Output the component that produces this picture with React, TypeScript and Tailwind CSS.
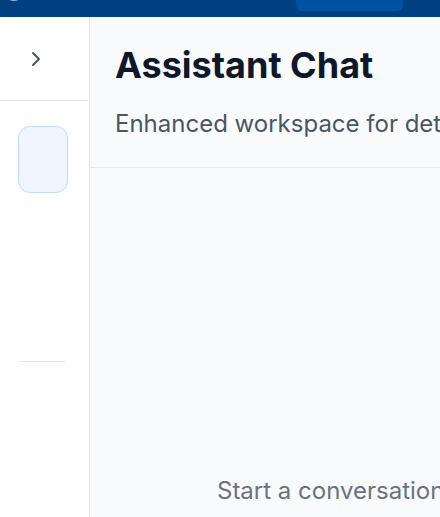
import { ChevronRight } from "lucide-react"

const App = () => {
  return (
    <div className="h-[517px] w-[440px] overflow-hidden flex flex-col font-['Inter',sans-serif]">
      {/* top bar, mostly scrolled out of view */}
      <div className="h-[17px] shrink-0 bg-[#004080] flex items-start overflow-hidden pl-1">
        <div className="-mt-[19px] w-5 h-5 rounded-full border-2 border-white/60 shrink-0" />
        <span className="-mt-[18px] ml-[14px] text-white/80 text-sm leading-5 whitespace-nowrap">Assistant Help</span>
        <div className="ml-auto mr-[37px] w-[107px] h-[40px] -mt-[29px] rounded-md bg-[#0052a3] flex items-end justify-center pb-[10px] text-white text-sm leading-5 shrink-0">
          <span className="pl-8 whitespace-nowrap">Copy reply</span>
        </div>
      </div>

      <div className="flex-1 flex min-h-0">
        <aside className="w-[90px] shrink-0 bg-white border-r border-gray-200 flex flex-col">
          <div className="h-[84px] shrink-0 flex items-center pl-6 border-b border-gray-200">
            <ChevronRight className="w-6 h-6 text-gray-600" strokeWidth={2} />
          </div>
          <div className="pt-[25px] pl-[18px]">
            <div className="w-[50px] h-[67px] rounded-xl border border-blue-200 bg-blue-50" />
          </div>
          <div className="mt-[168px] ml-[18px] w-[47px] h-px bg-gray-200" />
        </aside>

        <main className="flex-1 min-w-0 bg-slate-50 flex flex-col">
          <div className="shrink-0 border-b border-gray-200 px-[25px] pt-[28px] pb-[27px]">
            <h1 className="text-4xl font-bold text-slate-900 whitespace-nowrap">Assistant Chat</h1>
            <p className="mt-[23px] text-2xl text-gray-600 whitespace-nowrap">Enhanced workspace for detailed conversations</p>
          </div>
          <div className="flex-1 flex items-end pb-[10px] pl-[127px]">
            <p className="text-2xl text-gray-500 whitespace-nowrap">Start a conversation</p>
          </div>
        </main>
      </div>
    </div>
  )
}

export default App
